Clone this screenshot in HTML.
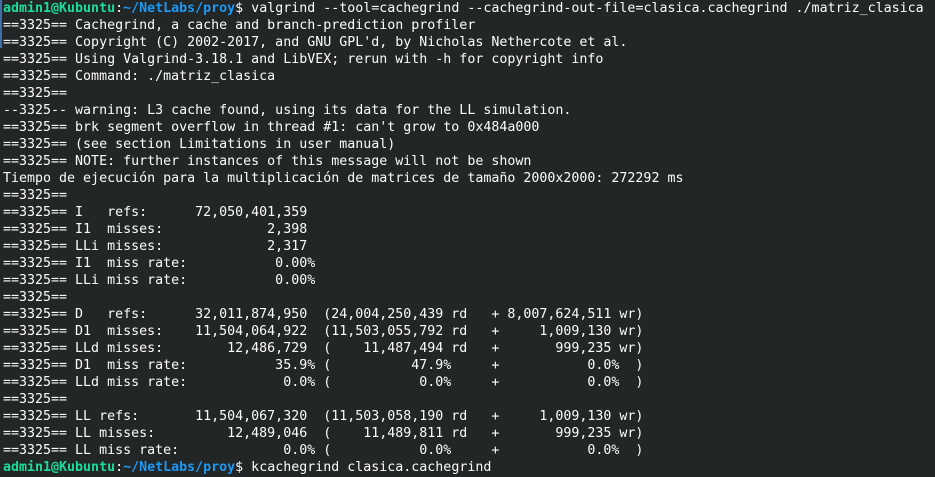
<!DOCTYPE html>
<html><head><meta charset="utf-8"><style>
html,body{margin:0;padding:0;background:#232627;width:935px;height:477px;overflow:hidden;position:relative}
pre{margin:0;padding:0 0 0 3px;font-family:"DejaVu Sans Mono","Liberation Mono",monospace;font-size:13.3px;line-height:17px;color:#fcfcfc;white-space:pre}
.g{color:#1cdc9a;font-weight:bold}.b{color:#1d99f3;font-weight:bold}
.bar{position:absolute;left:0;top:0;width:2px;height:48px;background:#3d6fa8}
</style></head><body><div class="bar"></div><pre><span class="g">admin1@Kubuntu</span>:<span class="b">~/NetLabs/proy</span>$ valgrind --tool=cachegrind --cachegrind-out-file=clasica.cachegrind ./matriz_clasica
==3325== Cachegrind, a cache and branch-prediction profiler
==3325== Copyright (C) 2002-2017, and GNU GPL'd, by Nicholas Nethercote et al.
==3325== Using Valgrind-3.18.1 and LibVEX; rerun with -h for copyright info
==3325== Command: ./matriz_clasica
==3325== 
--3325-- warning: L3 cache found, using its data for the LL simulation.
==3325== brk segment overflow in thread #1: can't grow to 0x484a000
==3325== (see section Limitations in user manual)
==3325== NOTE: further instances of this message will not be shown
Tiempo de ejecución para la multiplicación de matrices de tamaño 2000x2000: 272292 ms
==3325== 
==3325== I   refs:      72,050,401,359
==3325== I1  misses:             2,398
==3325== LLi misses:             2,317
==3325== I1  miss rate:           0.00%
==3325== LLi miss rate:           0.00%
==3325== 
==3325== D   refs:      32,011,874,950  (24,004,250,439 rd   + 8,007,624,511 wr)
==3325== D1  misses:    11,504,064,922  (11,503,055,792 rd   +     1,009,130 wr)
==3325== LLd misses:        12,486,729  (    11,487,494 rd   +       999,235 wr)
==3325== D1  miss rate:           35.9% (          47.9%     +           0.0%  )
==3325== LLd miss rate:            0.0% (           0.0%     +           0.0%  )
==3325== 
==3325== LL refs:       11,504,067,320  (11,503,058,190 rd   +     1,009,130 wr)
==3325== LL misses:         12,489,046  (    11,489,811 rd   +       999,235 wr)
==3325== LL miss rate:             0.0% (           0.0%     +           0.0%  )
<span class="g">admin1@Kubuntu</span>:<span class="b">~/NetLabs/proy</span>$ kcachegrind clasica.cachegrind</pre></body></html>
